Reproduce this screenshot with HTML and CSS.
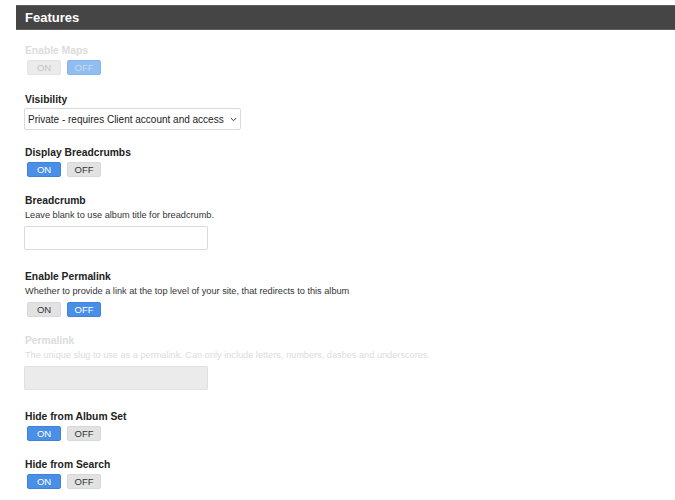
FILE: index.html
```html
<!DOCTYPE html>
<html>
<head>
<meta charset="utf-8">
<link rel="stylesheet" href="styles.css">
</head>
<body>
<div class="page">
  <div class="panel-head">Features</div>
  <div class="fields">
    <div class="field field-toggle disabled gap-maps">
      <div class="label">Enable Maps</div>
      <div class="toggle">
        <span class="btn">ON</span><span class="btn active">OFF</span>
      </div>
    </div>
    <div class="field field-select">
      <div class="label">Visibility</div>
      <div class="select-wrap">
        <select class="select">
          <option>Private - requires Client account and access</option>
        </select>
        <svg class="chev" width="7" height="5" viewBox="0 0 7 5"><path d="M0.8 1 L3.5 3.7 L6.2 1" fill="none" stroke="#333" stroke-width="1"/></svg>
      </div>
    </div>
    <div class="field field-toggle">
      <div class="label">Display Breadcrumbs</div>
      <div class="toggle">
        <span class="btn active">ON</span><span class="btn">OFF</span>
      </div>
    </div>
    <div class="field field-input">
      <div class="label">Breadcrumb</div>
      <div class="desc">Leave blank to use album title for breadcrumb.</div>
      <input class="text" type="text">
    </div>
    <div class="field field-toggle">
      <div class="label">Enable Permalink</div>
      <div class="desc">Whether to provide a link at the top level of your site, that redirects to this album</div>
      <div class="toggle">
        <span class="btn">ON</span><span class="btn active">OFF</span>
      </div>
    </div>
    <div class="field field-input disabled">
      <div class="label">Permalink</div>
      <div class="desc">The unique slug to use as a permalink. Can only include letters, numbers, dashes and underscores.</div>
      <input class="text" type="text" disabled>
    </div>
    <div class="field field-toggle">
      <div class="label">Hide from Album Set</div>
      <div class="toggle">
        <span class="btn active">ON</span><span class="btn">OFF</span>
      </div>
    </div>
    <div class="field field-toggle">
      <div class="label">Hide from Search</div>
      <div class="toggle">
        <span class="btn active">ON</span><span class="btn">OFF</span>
      </div>
    </div>
  </div>
</div>
</body>
</html>
```

FILE: styles.css
```css
html, body {
  margin: 0;
  padding: 0;
  background: #fff;
}
body {
  font-family: "Liberation Sans", Arial, sans-serif;
  color: #222;
}
.page {
  padding: 5px 0 0 16px;
}
.panel-head {
  height: 23px;
  background: #454545;
  border-top: 1px solid #5e5e5e;
  border-bottom: 1px solid #5e5e5e;
  color: #fff;
  font-weight: bold;
  font-size: 13px;
  line-height: 23px;
  padding-left: 9px;
}
.fields {
  padding: 13px 0 0 8px;
}
.field {
  display: flex;
  flex-direction: column;
  align-items: flex-start;
}
.field-toggle { margin-bottom: 16px; }
.gap-maps { margin-bottom: 17px; }
.field-select { margin-bottom: 15px; }
.field-input { margin-bottom: 19px; }
.label {
  font-size: 10.3px;
  font-weight: bold;
  line-height: 14px;
  padding-top: 1px;
  color: #222;
  padding-left: 1px;
}
.desc {
  font-size: 9.2px;
  line-height: 13px;
  color: #333;
  margin-top: 1px;
  padding-left: 1px;
}
.toggle {
  display: flex;
  gap: 6px;
  margin-top: 2px;
  padding-left: 3px;
}
.desc + .toggle { margin-top: 4px; }
.btn {
  box-sizing: border-box;
  width: 34px;
  height: 15px;
  border-radius: 2px;
  background: #e2e2e2;
  border: 1px solid #d8d8d8;
  color: #333;
  font-size: 9.5px;
  line-height: 13px;
  text-align: center;
}
.btn.active {
  background: #4a8fe7;
  border-color: #3f82da;
  color: #fff;
}
.disabled .label,
.disabled .desc {
  color: #dcdcdc;
}
.disabled .btn {
  background: #ebebeb;
  border-color: #e3e3e3;
  color: #c4c4c4;
}
.disabled .btn.active {
  background: #92bdf1;
  border-color: #87b4ec;
  color: #c3dbf8;
}
.select-wrap {
  position: relative;
  margin-top: 1px;
}
.select {
  -webkit-appearance: none;
  appearance: none;
  box-sizing: border-box;
  width: 217px;
  height: 22px;
  background: #fff;
  border: 1px solid #d9d9d9;
  border-radius: 2px;
  font-family: "Liberation Sans", Arial, sans-serif;
  font-size: 10px;
  color: #222;
  padding: 0 0 0 3px;
  margin: 0;
}
.chev {
  position: absolute;
  left: 206px;
  top: 9px;
}
.text {
  box-sizing: border-box;
  width: 184px;
  height: 24px;
  margin: 4px 0 0 0;
  border: 1px solid #dadada;
  border-radius: 2px;
  background: #fff;
  padding: 0 4px;
}
.text:disabled {
  background: #ebebeb;
  border-color: #e0e0e0;
}
```
